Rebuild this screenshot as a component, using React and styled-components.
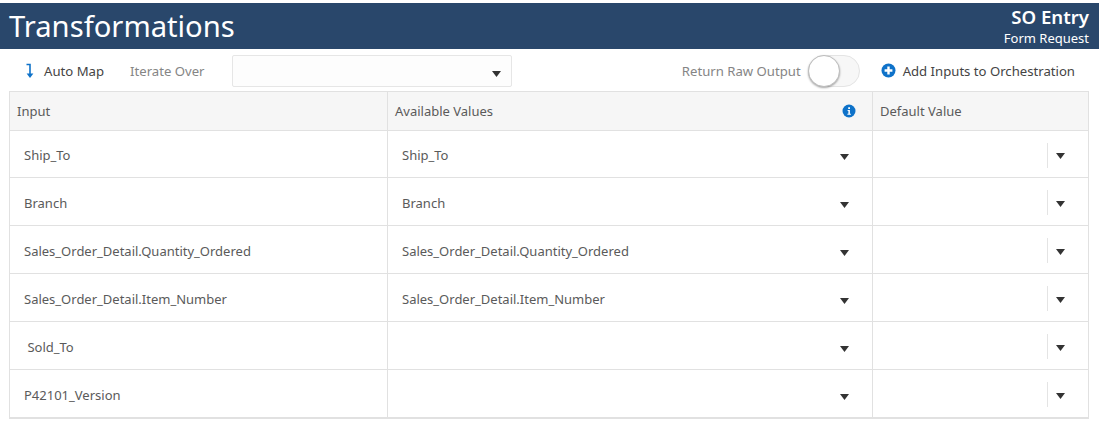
import React from 'react';
import styled, { createGlobalStyle } from 'styled-components';

const GlobalStyle = createGlobalStyle`
  html, body { margin: 0; padding: 0; background: #fff; }
  body { font-family: "Noto Sans", "Open Sans", sans-serif; color: #4a4a4a; }
`;

const Page = styled.div`
  width: 1099px;
  height: 441px;
  padding-top: 3px;
  box-sizing: border-box;
  overflow: hidden;
`;
const Header = styled.header`
  display: flex;
  justify-content: space-between;
  height: 46px;
  padding: 0 10px 0 9px;
  background: #29476b;
  color: #fff;
`;
const Title = styled.h1`
  margin: 0;
  font-size: 29.2px;
  font-weight: 400;
  line-height: 46px;
`;
const Meta = styled.div`
  display: flex;
  flex-direction: column;
  align-items: flex-end;
`;
const MetaTitle = styled.span`
  font-size: 18.6px;
  font-weight: 600;
  line-height: 27px;
`;
const MetaSub = styled.span`
  font-size: 13px;
  line-height: 17px;
`;
const Toolbar = styled.div`
  display: flex;
  align-items: center;
  height: 42px;
  padding: 1px 24px 0 25px;
  font-size: 13.15px;
  box-sizing: border-box;
`;
const ToolLabel = styled.span`
  color: ${(p) => (p.$muted ? '#858585' : '#444')};
  margin-left: ${(p) => p.$gap || 0}px;
`;
const IterateSelect = styled.div`
  display: flex;
  align-items: flex-end;
  justify-content: flex-end;
  width: 280px;
  height: 32px;
  margin-left: 27px;
  padding: 0 10px 9px 0;
  border: 1px solid #e6e6e6;
  border-radius: 2px;
  background: #fdfdfd;
  box-sizing: border-box;
`;
const Spacer = styled.div`
  flex: 1;
`;
const Toggle = styled.div`
  position: relative;
  width: 52px;
  height: 32px;
  margin-left: 7px;
  border: 1px solid #e4e4e4;
  border-radius: 16px;
  background: #f7f7f7;
  box-sizing: border-box;
`;
const Knob = styled.div`
  position: absolute;
  left: -1px;
  top: -1px;
  width: 30px;
  height: 30px;
  border-radius: 50%;
  background: #fff;
  border: 1px solid #bdbdbd;
  box-shadow: 0 1px 2px rgba(0, 0, 0, 0.35);
`;
const AddButton = styled.div`
  display: flex;
  align-items: center;
  gap: 7px;
  margin-left: 21px;
  color: #444;
`;
const Table = styled.div`
  display: grid;
  grid-template-columns: 377px 485px 216px;
  grid-template-rows: 39px 47px repeat(4, 48px) 47px;
  width: 1080px;
  margin-left: 9px;
  border: 1px solid #e1e1e1;
  border-bottom-width: 2px;
  box-sizing: border-box;
  font-size: 13px;
`;
const HeadCell = styled.div`
  display: flex;
  align-items: center;
  justify-content: space-between;
  padding: 0 16px 0 7px;
  background: #f6f6f6;
  border-bottom: 1px solid #e1e1e1;
  border-left: ${(p) => (p.$first ? 'none' : '1px solid #e1e1e1')};
  color: #5a5a5a;
`;
const Cell = styled.div`
  display: flex;
  align-items: center;
  justify-content: space-between;
  padding: 2px 23px 0 14px;
  border-bottom: ${(p) => (p.$last ? 'none' : '1px solid #e1e1e1')};
  border-left: ${(p) => (p.$first ? 'none' : '1px solid #e1e1e1')};
  color: #5a5a5a;
  white-space: pre;
`;
const DefaultCell = styled(Cell)`
  justify-content: flex-end;
  padding: 2px 23px 0 0;
`;
const Divider = styled.span`
  width: 1px;
  height: 25px;
  margin-right: 8px;
  background: #e4e4e4;
`;
const Caret = styled.svg.attrs({ width: 9, height: 6, viewBox: '0 0 9 6' })`
  margin-top: ${(p) => p.$drop || 0}px;
`;

const CaretIcon = ({ drop }) => (
  <Caret $drop={drop}>
    <path d="M0 0h9L4.5 6z" fill="#333" />
  </Caret>
);

const rows = [
  ['Ship_To', 'Ship_To'],
  ['Branch', 'Branch'],
  ['Sales_Order_Detail.Quantity_Ordered', 'Sales_Order_Detail.Quantity_Ordered'],
  ['Sales_Order_Detail.Item_Number', 'Sales_Order_Detail.Item_Number'],
  [' Sold_To', ''],
  ['P42101_Version', ''],
];

export default function App() {
  return (
    <Page>
      <GlobalStyle />
      <Header>
        <Title>Transformations</Title>
        <Meta>
          <MetaTitle>SO Entry</MetaTitle>
          <MetaSub>Form Request</MetaSub>
        </Meta>
      </Header>
      <Toolbar>
        <svg width="10" height="16" viewBox="0 0 10 16">
          <path d="M1.5 1.5h3.5V11" fill="none" stroke="#0e72c9" strokeWidth="1.6" />
          <path d="M1.6 10.5h6.8L5 15z" fill="#0e72c9" />
        </svg>
        <ToolLabel $gap={9}>Auto Map</ToolLabel>
        <ToolLabel $muted $gap={26}>Iterate Over</ToolLabel>
        <IterateSelect><CaretIcon /></IterateSelect>
        <Spacer />
        <ToolLabel $muted>Return Raw Output</ToolLabel>
        <Toggle><Knob /></Toggle>
        <AddButton>
          <svg width="15" height="15" viewBox="0 0 15 15">
            <circle cx="7.5" cy="7.5" r="7" fill="#0e72c9" />
            <path d="M7.5 3.6v7.8M3.6 7.5h7.8" stroke="#fff" strokeWidth="2.4" />
          </svg>
          Add Inputs to Orchestration
        </AddButton>
      </Toolbar>
      <Table>
        <HeadCell $first>Input</HeadCell>
        <HeadCell>
          Available Values
          <svg width="14" height="14" viewBox="0 0 14 14">
            <circle cx="7" cy="7" r="6.5" fill="#0e72c9" />
            <path d="M5.6 5.9h2.3v3.9h1v1H5.4v-1h1V6.9h-.8zM6.2 3.2h1.8v1.7H6.2z" fill="#fff" />
          </svg>
        </HeadCell>
        <HeadCell>Default Value</HeadCell>
        {rows.map(([input, value], i) => {
          const last = i === rows.length - 1;
          return (
            <React.Fragment key={i}>
              <Cell $first $last={last}>{input}</Cell>
              <Cell $last={last}>{value || <span />}<CaretIcon drop={4} /></Cell>
              <DefaultCell $last={last}><Divider /><CaretIcon drop={2} /></DefaultCell>
            </React.Fragment>
          );
        })}
      </Table>
    </Page>
  );
}
